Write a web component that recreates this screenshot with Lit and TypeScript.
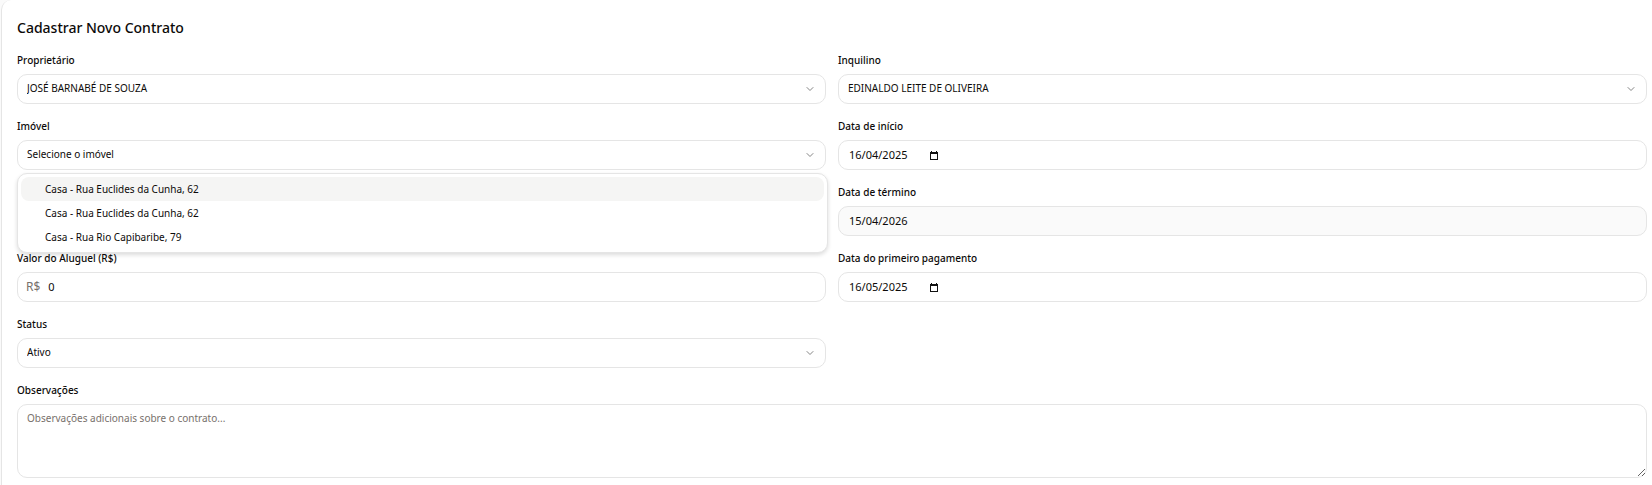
import { LitElement, html, css, svg } from "lit";
import { customElement, state } from "lit/decorators.js";

const chevron = svg`<path d="m6 9 6 6 6-6" />`;

@customElement("app-root")
export class AppRoot extends LitElement {
  static styles = css`
    :host {
      display: block;
      height: 100vh;
      overflow: hidden;
      background: #fafafa;
      color: #0c0a09;
      font-family: "Segoe UI", "Noto Sans", "Open Sans", sans-serif;
      font-size: 10px;
      line-height: 16px;
    }
    * {
      box-sizing: border-box;
    }
    .card {
      min-height: calc(100vh + 16px);
      margin-left: 1px;
      padding: 19px 5px 16px 15px;
      border: 1px solid #e5e5e5;
      border-width: 0 0 0 1px;
      border-top-left-radius: 10px;
      background: #fff;
    }
    h1 {
      margin: 0 0 15px;
      font-size: 14px;
      line-height: 18px;
      font-weight: 500;
    }
    form {
      display: grid;
      grid-template-columns: repeat(2, minmax(0, 1fr));
      gap: 14px 12px;
    }
    .field {
      display: flex;
      flex-direction: column;
      gap: 6px;
    }
    .wide {
      grid-column: 1 / -1;
    }
    .left {
      grid-column: 1;
    }
    label {
      font-weight: 500;
      align-self: flex-start;
    }
    .box {
      position: relative;
      display: flex;
      align-items: center;
      height: 30px;
      border: 1px solid #e5e5e5;
      border-radius: 10px;
      background: #fff;
    }
    .readonly {
      background: #fafafa;
    }
    select,
    input,
    textarea {
      font: inherit;
      color: inherit;
      margin: 0;
      outline: none;
      border: 0;
      background: transparent;
    }
    select {
      appearance: none;
      width: 100%;
      height: 28px;
      padding: 0 32px 2px 9px;
      border-radius: 10px;
    }
    .chevron {
      position: absolute;
      right: 9px;
      width: 12px;
      height: 12px;
      fill: none;
      stroke: #858585;
      stroke-width: 2;
      stroke-linecap: round;
      stroke-linejoin: round;
      pointer-events: none;
    }
    .date {
      width: 88px;
      height: 28px;
      padding: 0 0 2px 10px;
      font-size: 11px;
    }
    .money {
      flex: 1;
      min-width: 0;
      height: 28px;
      padding: 0 8px 2px;
      font-size: 11px;
    }
    .prefix {
      padding-left: 8px;
      font-size: 12px;
      color: #78716c;
    }
    .picker {
      display: flex;
      padding: 0;
      border: 0;
      margin-left: 3px;
      background: none;
      color: #111;
    }
    .picker svg {
      width: 8px;
      height: 9px;
    }
    textarea {
      display: block;
      width: 100%;
      height: 74px;
      padding: 5px 9px;
      border: 1px solid #e5e5e5;
      border-radius: 10px;
      resize: vertical;
    }
    textarea::placeholder {
      color: #78716c;
    }
    .menu {
      position: absolute;
      z-index: 2;
      top: 32px;
      left: -1px;
      right: -3px;
      margin: 0;
      padding: 3px;
      list-style: none;
      border: 1px solid #e5e5e5;
      border-radius: 10px;
      background: #fff;
      box-shadow: 0 2px 4px rgb(0 0 0 / 0.14);
    }
    .option {
      padding: 4px 24px;
      border-radius: 8px;
    }
    .active {
      background: #f5f5f4;
    }
  `;

  @state() private active = 0;

  private properties = [
    "Casa - Rua Euclides da Cunha, 62",
    "Casa - Rua Euclides da Cunha, 62",
    "Casa - Rua Rio Capibaribe, 79",
  ];

  private renderSelect(id: string, label: string, value: string, menu: unknown = "", extra = "") {
    return html`<div class="field ${extra}">
      <label for=${id}>${label}</label>
      <div class="box">
        <select id=${id}>
          <option>${value}</option>
        </select>
        <svg class="chevron" viewBox="0 0 24 24" aria-hidden="true">${chevron}</svg>
        ${menu}
      </div>
    </div>`;
  }

  private renderDate(id: string, label: string, value: string, readonly = false) {
    return html`<div class="field">
      <label for=${id}>${label}</label>
      <div class="box ${readonly ? "readonly" : ""}">
        <input class="date" id=${id} .value=${value} ?readonly=${readonly} />
        ${readonly
          ? ""
          : html`<button class="picker" type="button" aria-label="Abrir calendário">
              <svg viewBox="0 0 8 9" shape-rendering="crispEdges">
                <path fill="currentColor" fill-rule="evenodd" d="M1 0h1v1h4V0h1v1h1v8H0V1h1zM1 3v5h6V3z" />
              </svg>
            </button>`}
      </div>
    </div>`;
  }

  render() {
    const menu = html`<ul class="menu" role="listbox" aria-label="Imóvel">
      ${this.properties.map(
        (name, i) => html`<li
          class="option ${i === this.active ? "active" : ""}"
          role="option"
          aria-selected=${i === this.active ? "true" : "false"}
          @mouseenter=${() => (this.active = i)}
        >
          ${name}
        </li>`
      )}
    </ul>`;
    return html`<main class="card">
      <h1>Cadastrar Novo Contrato</h1>
      <form>
        ${this.renderSelect("owner", "Proprietário", "JOSÉ BARNABÉ DE SOUZA")}
        ${this.renderSelect("tenant", "Inquilino", "EDINALDO LEITE DE OLIVEIRA")}
        ${this.renderSelect("property", "Imóvel", "Selecione o imóvel", menu)}
        ${this.renderDate("start", "Data de início", "16/04/2025")}
        <div></div>
        ${this.renderDate("end", "Data de término", "15/04/2026", true)}
        <div class="field">
          <label for="rent">Valor do Aluguel (R$)</label>
          <div class="box">
            <span class="prefix">R$</span>
            <input class="money" id="rent" inputmode="decimal" .value=${"0"} />
          </div>
        </div>
        ${this.renderDate("first", "Data do primeiro pagamento", "16/05/2025")}
        ${this.renderSelect("status", "Status", "Ativo", "", "left")}
        <div class="field wide">
          <label for="notes">Observações</label>
          <textarea id="notes" placeholder="Observações adicionais sobre o contrato..."></textarea>
        </div>
      </form>
    </main>`;
  }
}
